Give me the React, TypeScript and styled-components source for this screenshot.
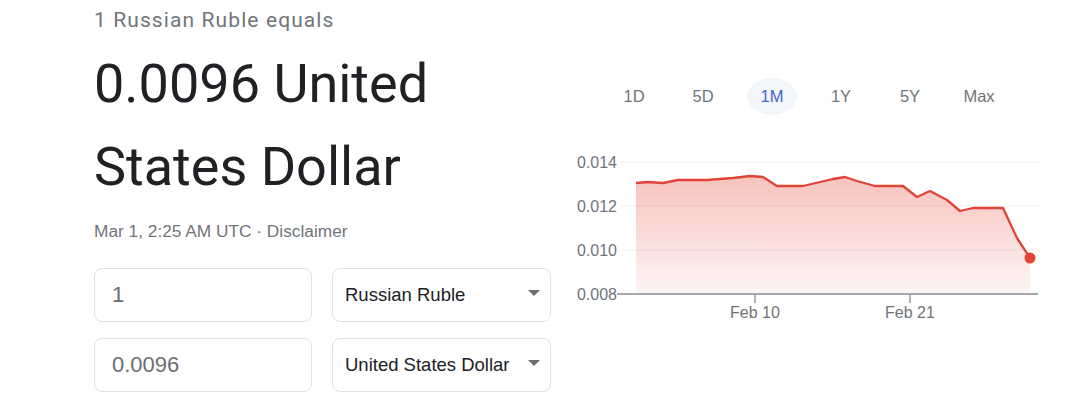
import React from "react";
import styled, { createGlobalStyle } from "styled-components";

const GlobalStyle = createGlobalStyle`
  html, body {
    margin: 0;
    padding: 0;
    background: #ffffff;
  }
  body {
    font-family: "Liberation Sans", Arial, sans-serif;
    color: #202124;
  }
`;

// chart points in page pixels, converted to svg coords below
const points: [number, number][] = [
  [636, 183], [648, 182], [663, 183], [678, 180], [707, 180], [733, 178],
  [750, 176], [763, 177], [777, 186], [803, 186], [820, 182], [833, 179],
  [845, 177], [857, 181], [875, 186], [903, 186], [917, 197], [930, 191],
  [947, 200], [960, 211], [973, 208], [1003, 208], [1017, 238], [1030, 258],
];

const CHART_X = 570;
const CHART_Y = 150;

const ranges = ["1D", "5D", "1M", "1Y", "5Y", "Max"];

export default function App() {
  const pts = points.map(([x, y]) => [x - CHART_X, y - CHART_Y]);
  const line = pts.map(([x, y], i) => `${i ? "L" : "M"}${x} ${y}`).join(" ");
  const last = pts[pts.length - 1];
  const area = `${line} L${last[0]} 144 L${pts[0][0]} 144 Z`;
  const yLabels = [
    { v: "0.014", y: 12 },
    { v: "0.012", y: 56 },
    { v: "0.010", y: 100 },
  ];

  return (
    <>
      <GlobalStyle />
      <Page>
        <LeftColumn>
          <Equals>1 Russian Ruble equals</Equals>
          <Result>0.0096 United States Dollar</Result>
          <Stamp>Mar 1, 2:25 AM UTC · Disclaimer</Stamp>
          <Converter>
            <AmountBox>1</AmountBox>
            <CurrencyBox>
              Russian Ruble
              <Caret />
            </CurrencyBox>
            <AmountBox>0.0096</AmountBox>
            <CurrencyBox>
              United States Dollar
              <Caret />
            </CurrencyBox>
          </Converter>
        </LeftColumn>

        <RightColumn>
          <Tabs>
            {ranges.map((r) => (
              <Tab key={r} active={r === "1M"}>
                {r}
              </Tab>
            ))}
          </Tabs>
          <ChartSvg width={480} height={175} viewBox="0 0 480 175">
            <defs>
              <linearGradient id="fill" x1="0" y1="0" x2="0" y2="1">
                <stop offset="0%" stopColor="#e8574b" stopOpacity={0.36} />
                <stop offset="100%" stopColor="#e8574b" stopOpacity={0.06} />
              </linearGradient>
            </defs>
            {yLabels.map((l) => (
              <g key={l.v}>
                <line x1={50} x2={470} y1={l.y} y2={l.y} stroke="#f1f1f1" strokeWidth={1} />
                <AxisText x={47} y={l.y + 6} textAnchor="end">
                  {l.v}
                </AxisText>
              </g>
            ))}
            <path d={area} fill="url(#fill)" />
            <path d={line} fill="none" stroke="#df4436" strokeWidth={2.3} strokeLinejoin="round" />
            <circle cx={last[0]} cy={last[1]} r={5.5} fill="#e8453a" />
            <line x1={47} x2={468} y1={144} y2={144} stroke="#8a8d91" strokeWidth={1.3} />
            <AxisText x={47} y={150} textAnchor="end">
              0.008
            </AxisText>
            <line x1={185} x2={185} y1={144} y2={153} stroke="#8a8d91" strokeWidth={1.3} />
            <line x1={340} x2={340} y1={144} y2={153} stroke="#8a8d91" strokeWidth={1.3} />
            <AxisText x={185} y={168} textAnchor="middle">
              Feb 10
            </AxisText>
            <AxisText x={340} y={168} textAnchor="middle">
              Feb 21
            </AxisText>
          </ChartSvg>
        </RightColumn>
      </Page>
    </>
  );
}

const Page = styled.div`
  display: flex;
  width: 1080px;
  height: 414px;
  padding-left: 94px;
  box-sizing: border-box;
  overflow: hidden;
  gap: 18px;
`;

const LeftColumn = styled.div`
  width: 458px;
  display: flex;
  flex-direction: column;
`;

const Equals = styled.div`
  margin-top: 8px;
  font-family: "Roboto", "Liberation Sans", sans-serif;
  font-size: 21px;
  line-height: 24px;
  letter-spacing: 1.1px;
  color: #70757a;
`;

const Result = styled.div`
  margin-top: 10px;
  width: 380px;
  font-family: "Roboto", "Liberation Sans", sans-serif;
  font-size: 54px;
  line-height: 83px;
  color: #202124;
`;

const Stamp = styled.div`
  margin-top: 12px;
  font-size: 17.3px;
  line-height: 22px;
  color: #70757a;
`;

const Converter = styled.div`
  margin-top: 26px;
  display: grid;
  grid-template-columns: 218px 219px;
  column-gap: 20px;
  row-gap: 16px;
`;

const Box = styled.div`
  height: 54px;
  box-sizing: border-box;
  border: 1px solid #dfe1e5;
  border-radius: 8px;
  display: flex;
  align-items: center;
`;

const AmountBox = styled(Box)`
  padding-left: 17px;
  font-size: 22px;
  color: #6b6e72;
`;

const CurrencyBox = styled(Box)`
  position: relative;
  padding-left: 12px;
  font-size: 18.5px;
  color: #202124;
`;

const Caret = styled.span`
  position: absolute;
  right: 10px;
  top: 21px;
  width: 0;
  height: 0;
  border-left: 6px solid transparent;
  border-right: 6px solid transparent;
  border-top: 6px solid #6b6e72;
`;

const RightColumn = styled.div`
  width: 480px;
  display: flex;
  flex-direction: column;
  padding-top: 78px;
`;

const Tabs = styled.div`
  display: flex;
  gap: 19px;
  padding-left: 39px;
`;

const Tab = styled.div<{ active?: boolean }>`
  width: 50px;
  height: 37px;
  border-radius: 50%;
  display: flex;
  align-items: center;
  justify-content: center;
  font-size: 16.5px;
  color: ${(p) => (p.active ? "#4169c6" : "#70757a")};
  background: ${(p) => (p.active ? "#f2f5f9" : "transparent")};
`;

const ChartSvg = styled.svg`
  display: block;
  margin-top: 35px;
`;

const AxisText = styled.text`
  font-family: "Liberation Sans", Arial, sans-serif;
  font-size: 16px;
  fill: #70757a;
`;
